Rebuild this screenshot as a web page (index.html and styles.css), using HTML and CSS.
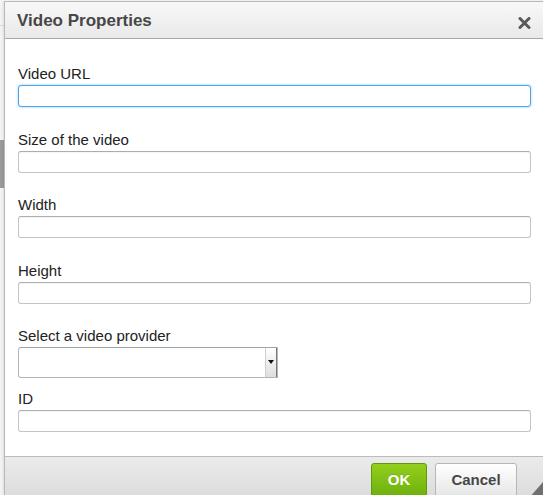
FILE: index.html
```html
<!DOCTYPE html>
<html lang="en">
<head>
<meta charset="utf-8">
<title>Video Properties</title>
<link rel="stylesheet" href="styles.css">
</head>
<body>
<div class="screen">
  <div class="backdrop">
    <div class="backdrop-line"></div>
    <div class="backdrop-tab"></div>
  </div>
  <div class="dialog">
    <div class="dialog-title">
      <span class="title-text">Video Properties</span>
      <span class="close" aria-label="Close">
        <svg width="13" height="12" viewBox="0 0 13 12"><path d="M2 1.5 L11 10.5 M11 1.5 L2 10.5" stroke="#5a5a5a" stroke-width="3" stroke-linecap="round"/></svg>
      </span>
    </div>
    <div class="dialog-body">
      <div class="field">
        <label class="label">Video URL</label>
        <div class="input input-focus"></div>
      </div>
      <div class="field">
        <label class="label">Size of the video</label>
        <div class="input"></div>
      </div>
      <div class="field">
        <label class="label">Width</label>
        <div class="input"></div>
      </div>
      <div class="field">
        <label class="label">Height</label>
        <div class="input"></div>
      </div>
      <div class="field field-select">
        <label class="label">Select a video provider</label>
        <div class="select">
          <div class="select-value"></div>
          <div class="select-arrow"><span class="caret"></span></div>
        </div>
      </div>
      <div class="field">
        <label class="label">ID</label>
        <div class="input"></div>
      </div>
    </div>
    <div class="dialog-footer">
      <span class="btn btn-ok">OK</span>
      <span class="btn btn-cancel">Cancel</span>
      <svg class="grip" width="14" height="16" viewBox="0 0 14 16"><path d="M14 0 L14 16 L0 16 Z" fill="#6f6f6f"/></svg>
    </div>
  </div>
</div>
</body>
</html>
```
FILE: styles.css
```css
html, body {
  margin: 0;
  padding: 0;
  background: #ffffff;
  overflow: hidden;
  font-family: "Liberation Sans", Arial, sans-serif;
}

.screen {
  display: flex;
  width: 543px;
  height: 495px;
  overflow: hidden;
}

.backdrop {
  flex: 0 0 4px;
  background: #f3f3f3;
  display: flex;
  flex-direction: column;
}

.backdrop-line {
  height: 1px;
  margin-top: 25px;
  background: #dcdcdc;
}

.backdrop-tab {
  height: 48px;
  margin-top: 114px;
  background: #9a9a9a;
}

.dialog {
  flex: 0 0 541px;
  box-sizing: border-box;
  margin-top: 1px;
  border: 1px solid #b8b8b8;
  background: #ffffff;
  display: flex;
  flex-direction: column;
  box-shadow: 0 0 3px rgba(0, 0, 0, 0.15);
}

.dialog-title {
  height: 36px;
  border-bottom: 1px solid #a9a9a9;
  background: linear-gradient(#f8f8f8, #e9e9e9);
  display: flex;
  align-items: center;
  padding-left: 12px;
  padding-right: 13px;
}

.title-text {
  flex: 1;
  font-size: 17px;
  font-weight: bold;
  color: #474747;
  line-height: 36px;
  padding-top: 1px;
}

.close {
  display: flex;
  width: 13px;
  height: 12px;
  margin-top: 6px;
}

.dialog-body {
  padding: 26px 13px 24px 13px;
  display: flex;
  flex-direction: column;
  gap: 23.67px;
}

.field {
  display: flex;
  flex-direction: column;
}

.field-select {
  margin-top: -1px;
  margin-bottom: -11px;
}

.label {
  display: block;
  font-size: 15px;
  line-height: 18px;
  margin-bottom: 2px;
  color: #222222;
}

.input {
  box-sizing: border-box;
  height: 22px;
  border: 1px solid #c4c4c4;
  border-top-color: #a9aeb3;
  border-radius: 3px;
  background: #ffffff;
  box-shadow: inset 0 1px 1px rgba(0, 0, 0, 0.04);
}

.input-focus {
  border: 1px solid #4aa4ea;
  box-shadow: 0 0 3px rgba(19, 159, 247, 0.45);
}

.select {
  box-sizing: border-box;
  width: 260px;
  height: 31px;
  border: 1px solid #b5b5b5;
  border-top-color: #9ea3a8;
  border-radius: 3px 0 0 3px;
  display: flex;
  background: #ffffff;
}

.select-value {
  flex: 1;
}

.select-arrow {
  width: 10px;
  border-left: 1px solid #d0d0d0;
  border-right: 1px solid #7a7a7a;
  background: linear-gradient(#ffffff, #dedede);
  display: flex;
  align-items: center;
  justify-content: center;
}

.caret {
  width: 0;
  height: 0;
  border-left: 3px solid transparent;
  border-right: 3px solid transparent;
  border-top: 4px solid #111111;
  margin-top: -1px;
}

.dialog-footer {
  position: relative;
  flex: 1;
  border-top: 1px solid #bcbcbc;
  background: linear-gradient(#ebebeb, #dcdcdc);
  display: flex;
  justify-content: flex-end;
  align-items: flex-start;
  gap: 8px;
  padding: 6px 27px 0 0;
}

.btn {
  box-sizing: border-box;
  height: 34px;
  border-radius: 3px;
  font-size: 15px;
  font-weight: bold;
  line-height: 32px;
  text-align: center;
}

.btn-ok {
  width: 56px;
  color: #ffffff;
  border: 1px solid #5e9a0b;
  background: linear-gradient(#93cf1c, #6eb00e);
  text-shadow: 0 -1px 0 rgba(0, 0, 0, 0.1);
}

.btn-cancel {
  width: 82px;
  color: #474747;
  border: 1px solid #b6b6b6;
  background: linear-gradient(#ffffff, #e6e6e6);
}

.grip {
  position: absolute;
  right: 1px;
  bottom: -1px;
}
```
